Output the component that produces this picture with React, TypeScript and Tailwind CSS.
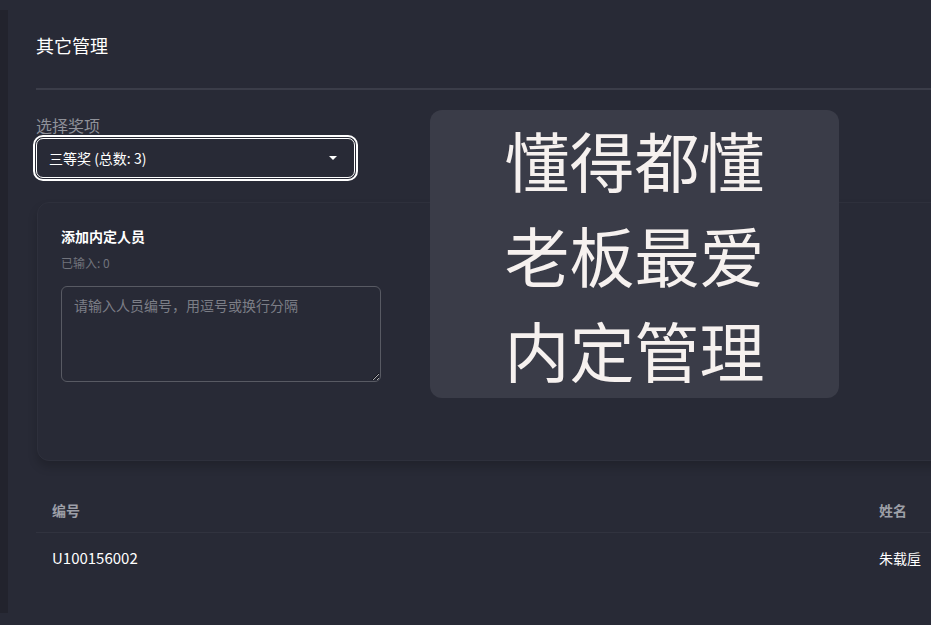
import { useState } from "react";

const rows = [{ id: "U100156002", name: "朱载垕" }];

export default function App() {
  const [ids, setIds] = useState("");
  const count = ids
    .split(/[,，\n]/)
    .map((s) => s.trim())
    .filter(Boolean).length;

  return (
    <div className="relative h-[625px] w-[931px] overflow-hidden bg-[#282a36] pt-[10px] font-['Noto_Sans_CJK_SC',sans-serif] text-white">
      <div className="flex h-[603px]">
        {/* sidebar edge */}
        <div className="w-[8px] shrink-0 bg-[#22232d]" />

        <main className="w-[960px] shrink-0 pl-[28px] pt-[23px]">
          <h1 className="text-[18px] leading-[24px] text-white">其它管理</h1>
          <div className="mt-[31px] h-[2px] bg-[#3b3d49]" />

          <label className="mt-[25px] block text-[16px] leading-[20px] text-[#8f9199]">
            选择奖项
          </label>
          <div className="-ml-[3px] w-[325px] rounded-[10px] border-2 border-white p-px">
            <div className="flex h-[40px] items-center justify-between rounded-[7px] border border-white px-[12px]">
              <span className="text-[14px] text-white">三等奖 (总数: 3)</span>
              <svg width="8" height="4" viewBox="0 0 8 4" className="mr-[5px]">
                <path d="M0 0h8L4 4z" fill="#fff" />
              </svg>
            </div>
          </div>

          <section className="ml-px mt-[21px] h-[259px] rounded-[12px] border border-[#2e303c] bg-[#282a36] px-[23px] pt-[23px] shadow-[0_6px_10px_rgba(0,0,0,0.18)]">
            <h3 className="text-[14px] font-bold leading-[20px] text-white">添加内定人员</h3>
            <p className="mt-[8px] text-[12px] leading-[17px] text-[#71737c]">已输入: {count}</p>
            <textarea
              value={ids}
              onChange={(e) => setIds(e.target.value)}
              placeholder="请输入人员编号，用逗号或换行分隔"
              className="mt-[15px] block h-[96px] w-[320px] rounded-[6px] border border-[#585a63] bg-transparent px-[12px] py-[8px] text-[14px] leading-[20px] text-white outline-none placeholder:text-[#7c7e86]"
            />
          </section>

          <div className="mt-[28px]">
            <div className="grid h-[44px] grid-cols-[827px_1fr] items-center border-b border-[#31333f] text-[14px] font-semibold text-[#9d9fa7]">
              <div className="pl-[16px]">编号</div>
              <div className="pl-[16px]">姓名</div>
            </div>
            {rows.map((r) => (
              <div
                key={r.id}
                className="grid h-[50px] grid-cols-[827px_1fr] items-center text-[15px] text-white"
              >
                <div className="pl-[16px]">{r.id}</div>
                <div className="pl-[16px] text-[14px]">{r.name}</div>
              </div>
            ))}
          </div>
        </main>
      </div>

      {/* overlay */}
      <div className="absolute left-[430px] top-[110px] flex h-[288px] w-[409px] flex-col items-center justify-center rounded-[12px] bg-[#3a3c48] text-[65px] font-normal leading-[95px] text-[#f6f1ef]">
        <div>懂得都懂</div>
        <div>老板最爱</div>
        <div>内定管理</div>
      </div>
    </div>
  );
}
